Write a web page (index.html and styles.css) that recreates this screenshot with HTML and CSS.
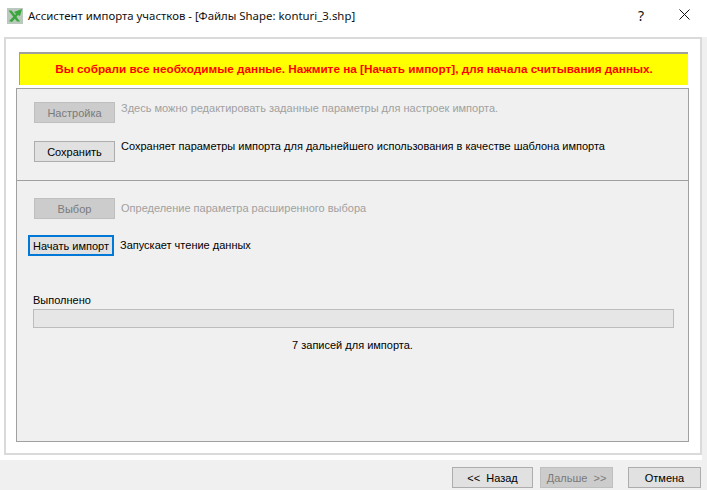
FILE: index.html
```html
<!DOCTYPE html>
<html lang="ru">
<head>
<meta charset="utf-8">
<title>Ассистент импорта участков</title>
<link rel="stylesheet" href="styles.css">
</head>
<body>
<div class="window">
  <header class="titlebar">
    <svg class="app-icon" width="16" height="16" viewBox="0 0 16 16">
      <rect width="16" height="16" fill="#b9c9bd"/>
      <path d="M1.5 2.5L4.5 2.5L13 13.5L10 13.5Z" fill="#3aa53a"/>
      <path d="M2 13L9 6L7 4L15 1L13 8L11 7L5 14Z" fill="#3aa53a"/>
    </svg>
    <span class="title">Ассистент импорта участков - [Файлы Shape: konturi_3.shp]</span>
    <span class="help">?</span>
    <svg class="close" width="11" height="11" viewBox="0 0 11 11">
      <path d="M.5 .5L10.5 10.5M10.5 .5L.5 10.5" stroke="#111" stroke-width="1" fill="none"/>
    </svg>
  </header>
  <div class="middle">
    <main class="panel">
      <div class="notice">Вы собрали все необходимые данные. Нажмите на [Начать импорт], для начала считывания данных.</div>
      <div class="group">
        <section class="top">
          <div class="row row-a">
            <button class="btn" disabled>Настройка</button>
            <span class="desc muted">Здесь можно редактировать заданные параметры для настроек импорта.</span>
          </div>
          <div class="row row-b">
            <button class="btn">Сохранить</button>
            <span class="desc high">Сохраняет параметры импорта для дальнейшего использования в качестве шаблона импорта</span>
          </div>
        </section>
        <section class="bottom">
          <div class="row row-c">
            <button class="btn" disabled>Выбор</button>
            <span class="desc low muted">Определение параметра расширенного выбора</span>
          </div>
          <div class="row row-d">
            <button class="btn focus">Начать импорт</button>
            <span class="desc low">Запускает чтение данных</span>
          </div>
          <div class="done">Выполнено</div>
          <div class="progress"></div>
          <div class="count">7 записей для импорта.</div>
        </section>
      </div>
    </main>
  </div>
  <footer class="footer">
    <button class="btn back">&lt;&lt;  Назад</button>
    <button class="btn next" disabled>Дальше  &gt;&gt;</button>
    <button class="btn cancel">Отмена</button>
  </footer>
</div>
</body>
</html>
```

FILE: styles.css
```css
* { box-sizing: border-box; }
html, body { margin: 0; padding: 0; }
body { width: 707px; height: 490px; overflow: hidden; background: #fff; font-family: "Liberation Sans", sans-serif; font-size: 11px; color: #000; }
.window { display: flex; flex-direction: column; height: 490px; }
.titlebar { height: 37px; flex: none; display: flex; align-items: center; padding: 0 0 6px 7px; background: #fff; }
.app-icon { flex: none; }
.title { margin-left: 5px; font-family: "Noto Sans", sans-serif; font-size: 11.4px; flex: 1; white-space: nowrap; color: #111; }
.help { font-family: "Noto Sans", sans-serif; font-size: 14px; margin-right: 35px; color: #111; }
.close { margin-right: 17px; margin-top: -2px; }
.middle { height: 423px; flex: none; padding-left: 4px; padding-right: 5px; background: linear-gradient(to right, #fff 702px, #f0f0f0 702px); }
.panel { height: 418px; background: #fff; border: 2px solid #dadada; padding: 13px 11px 0 10px; }
.notice { margin: 0 1px 0 3px; height: 33px; background: #ff0; border-top: 2px solid #a0a0a0; border-left: 1px solid #a0a0a0; color: #f00; font-weight: 700; font-size: 11.75px; display: flex; align-items: center; justify-content: center; padding-bottom: 2px; white-space: nowrap; }
.group { margin-top: 3px; height: 354px; background: #f0f0f0; border: 1px solid #a0a0a0; }
.top { height: 92px; border-bottom: 1px solid #a0a0a0; padding-top: 13px; }
.row { display: flex; align-items: flex-start; padding-left: 17px; }
.row-b { margin-top: 18px; }
.btn { height: 21px; width: 81px; padding: 0; border: 1px solid #adadad; background: #e1e1e1; font: inherit; color: #000; flex: none; white-space: pre; }
.btn:disabled { background: #ccc; border-color: #bfbfbf; color: #7a7a7a; }
.desc { margin-left: 6px; margin-top: -1px; line-height: 14px; white-space: nowrap; }
.desc.high { margin-top: -2px; }
.desc.low { margin-top: 3px; }
.muted { color: #a0a0a0; }
.bottom { padding-top: 17px; }
.row-d { margin-top: 16px; padding-left: 11px; }
.focus { width: 86px; border: 2px solid #0078d7; }
.done { margin: 37px 0 0 16px; line-height: 14px; }
.progress { margin: 2px 14px 0 16px; height: 19px; background: #e6e6e6; border: 1px solid #bcbcbc; }
.count { margin-top: 10px; text-align: center; line-height: 14px; }
.footer { flex: none; height: 30px; background: #f0f0f0; display: flex; padding: 7px 0 0 452px; align-items: flex-start; }
.back { width: 81px; }
.next { width: 73px; margin-left: 7px; }
.cancel { width: 73px; margin-left: 15px; }
```
